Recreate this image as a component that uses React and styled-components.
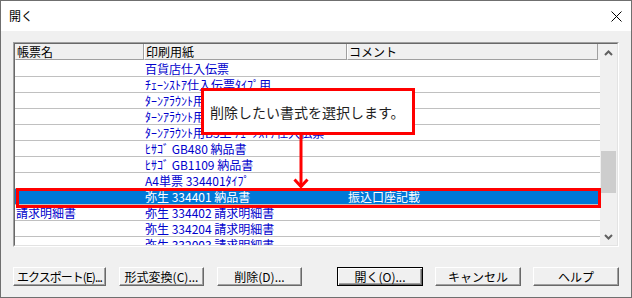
import React from 'react';
import styled, { createGlobalStyle } from 'styled-components';

const Global = createGlobalStyle`
  html, body { margin: 0; padding: 0; background: #fff; }
  body { font-family: "Noto Sans CJK JP", "Noto Sans", sans-serif; }
`;

const Window = styled.div`
  position: relative;
  width: 632px;
  height: 298px;
  box-sizing: border-box;
  border: 1px solid #6f6f6f;
  background: #f0f0f0;
  display: flex;
  flex-direction: column;
  font-family: "Noto Sans CJK JP", "Noto Sans", sans-serif;
  font-size: 12px;
  color: #000;
  overflow: hidden;
`;

const TitleBar = styled.div`
  height: 30px;
  flex: none;
  background: #fff;
  display: flex;
  align-items: center;
  justify-content: space-between;
  padding: 0 9px 0 8px;
`;

const Title = styled.span`
  font-size: 12px;
  line-height: 14px;
  color: #000;
`;

const Body = styled.div`
  flex: 1;
  display: flex;
  flex-direction: column;
  padding: 11px 12px 0 12px;
`;

const ListFrame = styled.div`
  height: 205px;
  box-sizing: border-box;
  border: 1px solid;
  border-color: #a0a0a0 #ffffff #ffffff #a0a0a0;
  display: flex;
`;

const ListInner = styled.div`
  flex: 1;
  display: flex;
  border: 1px solid;
  border-color: #696969 #e3e3e3 #e3e3e3 #696969;
  background: #fff;
  overflow: hidden;
`;

const GridArea = styled.div`
  flex: 1;
  display: flex;
  flex-direction: column;
  overflow: hidden;
`;

const Columns = styled.div`
  display: grid;
  grid-template-columns: 129px 203px 251px;
`;

const HeaderRow = styled(Columns)`
  height: 16px;
  background: #f0f0f0;
  flex: none;
`;

const HeaderCell = styled.div`
  box-sizing: border-box;
  border-right: 1px solid #a0a0a0;
  border-bottom: 1px solid #a0a0a0;
  border-left: 1px solid ${p => (p.$first ? 'transparent' : '#ffffff')};
  padding-left: 1px;
  line-height: 15px;
  font-size: 12px;
  white-space: nowrap;
  overflow: hidden;
`;

const Rows = styled.div`
  padding-top: 1px;
  background: #fff;
`;

const Row = styled(Columns)`
  height: 16px;
  box-sizing: border-box;
  border-bottom: 1px solid #c0c0c0;
  background: ${p => (p.$selected ? '#0078d7' : '#fff')};
  color: ${p => (p.$selected ? '#fff' : '#0000cc')};
`;

const Cell = styled.div`
  padding-left: 1px;
  line-height: 15px;
  font-size: 12px;
  white-space: nowrap;
  overflow: hidden;
`;

const ScrollBar = styled.div`
  width: 17px;
  flex: none;
  display: flex;
  flex-direction: column;
  background: #f0f0f0;
`;

const ScrollButton = styled.div`
  height: 17px;
  flex: none;
  display: flex;
  align-items: center;
  justify-content: center;
`;

const Track = styled.div`
  flex: 1;
  display: flex;
  flex-direction: column;
`;

const Thumb = styled.div`
  margin: ${p => p.$top}px 1px 0 1px;
  height: ${p => p.$size}px;
  background: #cdcdcd;
`;

const ButtonRow = styled.div`
  margin-top: 20px;
  display: flex;
  justify-content: space-between;
`;

const ButtonGroup = styled.div`
  display: flex;
  gap: ${p => p.$gap}px;
`;

const Button = styled.button`
  width: ${p => p.$w}px;
  height: 19px;
  box-sizing: border-box;
  padding: 0;
  margin: 0;
  background: #f0f0f0;
  font-family: "Noto Sans CJK JP", "Noto Sans", sans-serif;
  font-size: 12px;
  line-height: 15px;
  color: #000;
  white-space: nowrap;
  letter-spacing: ${p => (p.$tight ? '-1px' : '0')};
  border: 1px solid;
  border-color: ${p => (p.$default ? '#000 #000 #000 #000' : '#fff #696969 #696969 #fff')};
  box-shadow: ${p =>
    p.$default
      ? 'inset 1px 1px 0 #fff, inset -1px -1px 0 #696969, inset -2px -2px 0 #a0a0a0'
      : 'inset -1px -1px 0 #a0a0a0'};
`;

const Callout = styled.div`
  position: absolute;
  left: 200px;
  top: 87px;
  width: 214px;
  height: 47px;
  box-sizing: border-box;
  border: 3px solid #ff0000;
  background: #fff;
  display: flex;
  align-items: center;
  padding-left: 6px;
  font-size: 14px;
  line-height: 18px;
  color: #1e1e1e;
  white-space: nowrap;
`;

const Arrow = styled.svg`
  position: absolute;
  left: 292px;
  top: 133px;
`;

const SelectionMark = styled.div`
  position: absolute;
  left: 15px;
  top: 187px;
  width: 585px;
  height: 20px;
  box-sizing: border-box;
  border: 3px solid #ff0000;
`;

const rows = [
  ['', '百貨店仕入伝票', ''],
  ['', 'ﾁｪｰﾝｽﾄｱ仕入伝票ﾀｲﾌﾟ用', ''],
  ['', 'ﾀｰﾝｱﾗｳﾝﾄ用B5上 ﾁｪｰﾝｽﾄｱ仕入伝票', ''],
  ['', 'ﾀｰﾝｱﾗｳﾝﾄ用A4上 ﾁｪｰﾝｽﾄｱ仕入伝票', ''],
  ['', 'ﾀｰﾝｱﾗｳﾝﾄ用B5上 ﾁｪｰﾝｽﾄｱ仕入伝票', ''],
  ['', 'ﾋｻｺﾞ GB480 納品書', ''],
  ['', 'ﾋｻｺﾞ GB1109 納品書', ''],
  ['', 'A4単票 334401ﾀｲﾌﾟ', ''],
  ['', '弥生 334401 納品書', '振込口座記載', true],
  ['請求明細書', '弥生 334402 請求明細書', ''],
  ['', '弥生 334204 請求明細書', ''],
  ['', '弥生 332003 請求明細書', ''],
];

const Chevron = ({ up }) => (
  <svg width="9" height="6" viewBox="0 0 9 6">
    <path
      d={up ? 'M1 5 L4.5 1.5 L8 5' : 'M1 1 L4.5 4.5 L8 1'}
      fill="none"
      stroke="#606060"
      strokeWidth="2"
    />
  </svg>
);

export default function App() {
  return (
    <>
      <Global />
      <Window>
        <TitleBar>
          <Title>開く</Title>
          <svg width="11" height="11" viewBox="0 0 11 11">
            <path d="M0.5 0.5 L10.5 10.5 M10.5 0.5 L0.5 10.5" stroke="#000" strokeWidth="1" />
          </svg>
        </TitleBar>
        <Body>
          <ListFrame>
            <ListInner>
              <GridArea>
                <HeaderRow>
                  <HeaderCell $first>帳票名</HeaderCell>
                  <HeaderCell>印刷用紙</HeaderCell>
                  <HeaderCell>コメント</HeaderCell>
                </HeaderRow>
                <Rows>
                  {rows.map((r, i) => (
                    <Row key={i} $selected={r[3]}>
                      <Cell>{r[0]}</Cell>
                      <Cell>{r[1]}</Cell>
                      <Cell>{r[2]}</Cell>
                    </Row>
                  ))}
                </Rows>
              </GridArea>
              <ScrollBar>
                <ScrollButton><Chevron up /></ScrollButton>
                <Track>
                  <Thumb $top={90} $size={42} />
                </Track>
                <ScrollButton><Chevron /></ScrollButton>
              </ScrollBar>
            </ListInner>
          </ListFrame>
          <ButtonRow>
            <ButtonGroup $gap={13}>
              <Button $w={93} $tight>エクスポート(E)...</Button>
              <Button $w={85}>形式変換(C)...</Button>
              <Button $w={85}>削除(D)...</Button>
            </ButtonGroup>
            <ButtonGroup $gap={12}>
              <Button $w={86} $default>開く(O)...</Button>
              <Button $w={86}>キャンセル</Button>
              <Button $w={86}>ヘルプ</Button>
            </ButtonGroup>
          </ButtonRow>
        </Body>
        <SelectionMark />
        <Callout>削除したい書式を選択します。</Callout>
        <Arrow width="16" height="56" viewBox="0 0 16 56">
          <path d="M8 0 L8 53" stroke="#ff0000" strokeWidth="3" fill="none" />
          <path d="M1.5 45.5 L8 52.5 L14.5 45.5" stroke="#ff0000" strokeWidth="3" fill="none" />
        </Arrow>
      </Window>
    </>
  );
}
